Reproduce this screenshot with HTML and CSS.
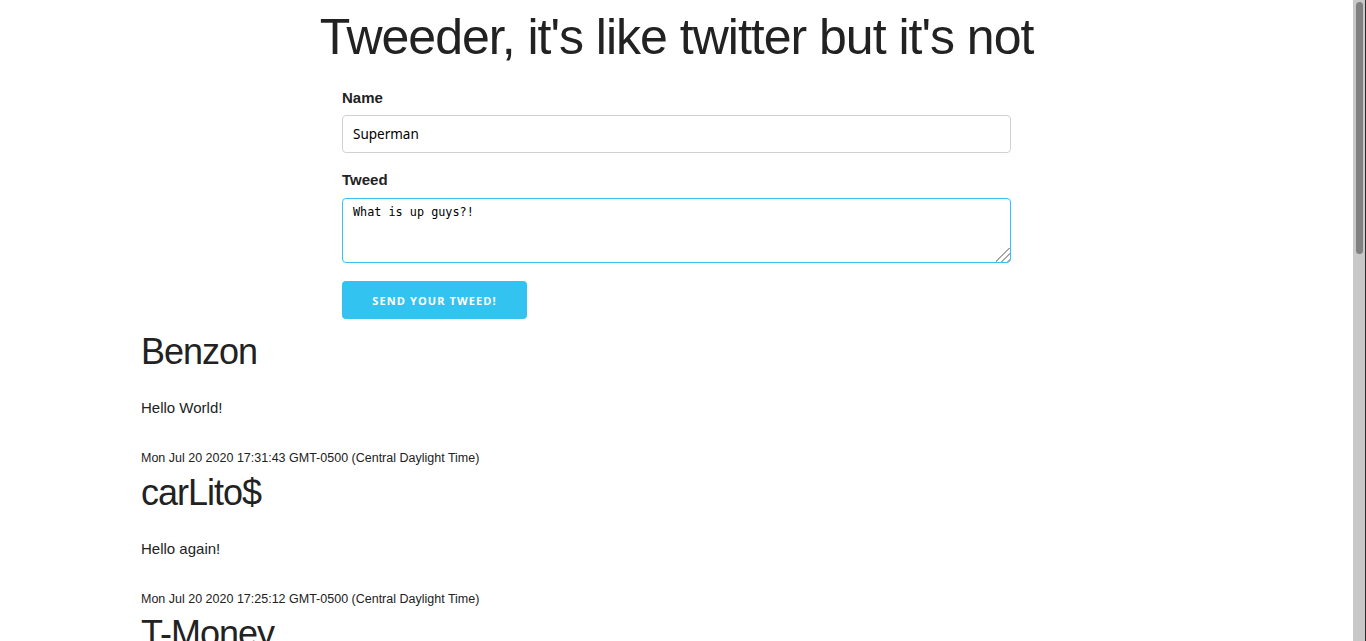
FILE: index.html
```html
<!DOCTYPE html>
<html lang="en">
<head>
<meta charset="utf-8">
<title>Tweeder</title>
<link rel="stylesheet" href="styles.css">
</head>
<body>
<div class="page">
  <h1 class="title">Tweeder, it's like twitter but it's not</h1>
  <form class="tweed-form">
    <label class="field-label" for="name">Name</label>
    <input class="text-input" id="name" type="text" value="Superman">
    <label class="field-label" for="tweed">Tweed</label>
    <div class="area-wrap">
      <textarea class="text-area" id="tweed" autofocus>What is up guys?!</textarea>
    </div>
    <button class="send-btn" type="button">Send your tweed!</button>
  </form>
  <div class="feed">
    <div class="post">
      <h3 class="post-name">Benzon</h3>
      <p class="post-body">Hello World!</p>
      <div class="post-date"><small>Mon Jul 20 2020 17:31:43 GMT-0500 (Central Daylight Time)</small></div>
    </div>
    <div class="post">
      <h3 class="post-name">carLito$</h3>
      <p class="post-body">Hello again!</p>
      <div class="post-date"><small>Mon Jul 20 2020 17:25:12 GMT-0500 (Central Daylight Time)</small></div>
    </div>
    <div class="post">
      <h3 class="post-name">T-Money</h3>
      <p class="post-body">First tweed!</p>
      <div class="post-date"><small>Mon Jul 20 2020 17:20:05 GMT-0500 (Central Daylight Time)</small></div>
    </div>
  </div>
</div>
<div class="scrollbar"><div class="scroll-thumb"></div></div>
<script>
  var t = document.getElementById('tweed');
  t.focus();
  t.setSelectionRange(t.value.length, t.value.length);
</script>
</body>
</html>
```
FILE: styles.css
```css
html, body {
  margin: 0;
  padding: 0;
  height: 641px;
  overflow: hidden;
  background: #fff;
}
body {
  display: flex;
  font-family: "Liberation Sans", Arial, sans-serif;
  font-size: 15px;
  line-height: 24px;
  color: #222;
}
.page {
  flex: 1;
  min-width: 0;
}
.title {
  margin: 7px 0 19px;
  text-align: center;
  font-size: 50px;
  line-height: 60px;
  font-weight: 400;
  letter-spacing: -1px;
}
.tweed-form {
  width: 669px;
  margin: 0 auto;
  display: flex;
  flex-direction: column;
  align-items: flex-start;
}
.field-label {
  display: block;
  font-weight: 700;
  font-size: 15px;
  line-height: 24px;
  margin-bottom: 5px;
}
.text-input {
  box-sizing: border-box;
  width: 100%;
  height: 38px;
  padding: 6px 10px;
  border: 1px solid #d1d1d1;
  border-radius: 4px;
  font-family: "Noto Sans", sans-serif;
  font-size: 13.5px;
  color: #000;
  margin: 0 0 15px;
  outline: none;
}
.area-wrap {
  position: relative;
  width: 100%;
  margin: 1px 0 18px;
}
.area-wrap::after {
  content: "";
  position: absolute;
  right: 1px;
  bottom: 1px;
  width: 14px;
  height: 14px;
  background: linear-gradient(135deg,
    transparent 0 44%, #a8a8a8 44% 52%, transparent 52% 66%,
    #a8a8a8 66% 74%, transparent 74% 86%, #a8a8a8 86% 94%, transparent 94%);
  pointer-events: none;
}
.text-area {
  box-sizing: border-box;
  width: 100%;
  height: 65px;
  padding: 6px 10px;
  border: 1px solid #33c3f0;
  border-radius: 4px;
  font-family: "DejaVu Sans Mono", monospace;
  font-size: 11.8px;
  line-height: 15px;
  color: #000;
  caret-color: #000;
  margin: 0;
  outline: none;
  resize: none;
  display: block;
}
.send-btn {
  width: 185px;
  height: 38px;
  border: none;
  border-radius: 4px;
  background: #33c3f0;
  color: #fff;
  font-family: "Open Sans", sans-serif;
  font-weight: 700;
  font-size: 11px;
  letter-spacing: 1.1px;
  text-transform: uppercase;
  padding: 0;
  margin: 0 0 10px;
}
.feed {
  padding-left: 141px;
}
.post-name {
  margin: 0 0 20px;
  font-size: 36px;
  line-height: 46.8px;
  font-weight: 400;
  letter-spacing: -1px;
}
.post-body {
  margin: 0 0 25px;
}
.post-date small {
  font-size: 12.5px;
}
.scrollbar {
  flex: 0 0 13px;
  width: 13px;
  height: 641px;
  background: #c8c8c8;
  border-right: 1px solid #2a2a2a;
  padding-top: 2px;
  box-sizing: border-box;
  display: flex;
  justify-content: center;
}
.scroll-thumb {
  width: 7px;
  height: 252px;
  border-radius: 4px;
  background: #808080;
}
```
